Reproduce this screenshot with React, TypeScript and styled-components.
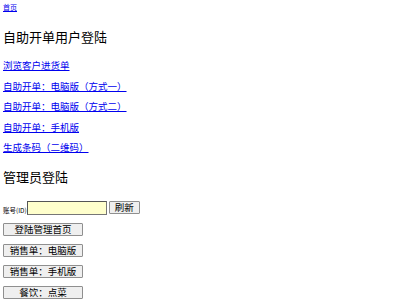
import styled, { createGlobalStyle } from 'styled-components';

const GlobalStyle = createGlobalStyle`
    html, body {
        margin: 0;
        padding: 0;
        background: #fff;
    }
    body {
        font-family: "Noto Sans CJK SC", "Noto Sans", sans-serif;
        color: #000;
    }
`;

const Page = styled.div`
    padding: 3px 3px 0 3px;
    display: flex;
    flex-direction: column;
    align-items: flex-start;
`;

const HomeLink = styled.a`
    font-size: 7px;
    line-height: 9px;
    color: #0000ee;
    text-decoration: underline;
`;

const Heading = styled.h2<{ $top: number }>`
    margin: ${p => p.$top}px 0 0 0;
    font-size: 13px;
    line-height: 15px;
    font-weight: normal;
`;

const LinkList = styled.div`
    display: flex;
    flex-direction: column;
    align-items: flex-start;
    gap: 8.5px;
    margin-top: 15px;
`;

const MenuLink = styled.a`
    font-size: 9.5px;
    line-height: 12px;
    color: #0000ee;
    text-decoration: underline;
`;

const LoginRow = styled.div`
    display: flex;
    align-items: center;
    margin-top: 17px;
`;

const Label = styled.span`
    font-size: 6.5px;
    line-height: 8px;
    margin-top: 3px;
`;

const IdInput = styled.input`
    box-sizing: border-box;
    width: 80px;
    height: 14px;
    margin: 0;
    padding: 0 2px;
    background: #ffffcc;
    border: 1px solid #767676;
    border-top-color: #555;
    border-left-color: #555;
    font-size: 8px;
`;

const Button = styled.button<{ $width?: number }>`
    box-sizing: border-box;
    width: ${p => p.$width ?? 80}px;
    height: 13px;
    margin: 0;
    padding: 0;
    background: #efefef;
    border: 1px solid #8f8f8f;
    border-radius: 1px;
    font-family: "Noto Sans CJK SC", sans-serif;
    font-size: 9.5px;
    line-height: 11px;
    color: #000;
    cursor: pointer;
`;

const RefreshButton = styled(Button)`
    margin-left: 2px;
    margin-top: -1px;
`;

const ButtonList = styled.div`
    display: flex;
    flex-direction: column;
    align-items: flex-start;
    gap: 8px;
    margin-top: 8px;
`;

const links = [
    '浏览客户进货单',
    '自助开单：电脑版（方式一）',
    '自助开单：电脑版（方式二）',
    '自助开单：手机版',
    '生成条码（二维码）',
];

const buttons = ['登陆管理首页', '销售单：电脑版', '销售单：手机版', '餐饮：点菜'];

export default function App() {
    return (
        <>
            <GlobalStyle />
            <Page>
                <HomeLink href="#">首页</HomeLink>
                <Heading $top={17}>自助开单用户登陆</Heading>
                <LinkList>
                    {links.map(l => (
                        <MenuLink key={l} href="#">{l}</MenuLink>
                    ))}
                </LinkList>
                <Heading $top={16}>管理员登陆</Heading>
                <LoginRow>
                    <Label>账号(ID)</Label>
                    <IdInput type="text" />
                    <RefreshButton $width={31}>刷新</RefreshButton>
                </LoginRow>
                <ButtonList>
                    {buttons.map(b => (
                        <Button key={b}>{b}</Button>
                    ))}
                </ButtonList>
            </Page>
        </>
    );
}
